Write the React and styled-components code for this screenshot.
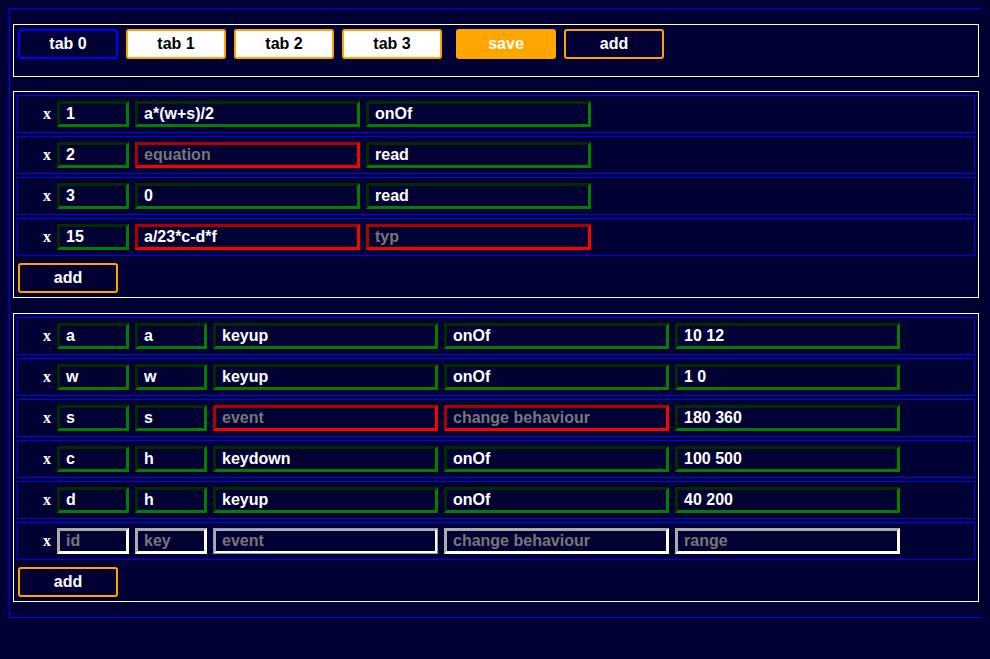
import React from "react";
import styled, { createGlobalStyle } from "styled-components";

const NAVY = "#000033";
const ORANGE = "#ffa500";

const GlobalStyle = createGlobalStyle`
  html, body {
    background: ${NAVY};
  }
  body {
    margin: 8px;
    font-family: "Liberation Sans", Arial, sans-serif;
    color: #fff;
  }
`;

const Frame = styled.div`
  box-sizing: border-box;
  width: 974px;
  margin-left: 1px;
  padding: 15px 3px;
  border: 1px solid #0000ff;
  display: flex;
  flex-direction: column;
`;

const Sheet = styled.div`
  box-sizing: border-box;
  border: 1px solid #fff;
  padding: 3px;
  margin-top: ${(props) => props.$top || 0}px;
`;

const TabBar = styled.div`
  box-sizing: border-box;
  border: 1px solid #fff;
  padding: 4px 4px 17px;
  display: flex;
  gap: 8px;
`;

const Button = styled.button`
  box-sizing: border-box;
  width: 100px;
  height: 30px;
  padding: 0;
  border-radius: 3px;
  border: 2px solid ${(props) => (props.$kind === "active" ? "#0000ff" : ORANGE)};
  background: ${(props) =>
    props.$kind === "tab" ? "#fff" : props.$kind === "save" ? ORANGE : "transparent"};
  color: ${(props) => (props.$kind === "tab" ? "#000" : "#fff")};
  font-family: "Liberation Sans", Arial, sans-serif;
  font-weight: bold;
  font-size: 16px;
  cursor: pointer;
  margin-left: ${(props) => props.$left || 0}px;
`;

const AddButton = styled(Button)`
  display: block;
  margin: 7px 0 1px 1px;
`;

const Row = styled.div`
  box-sizing: border-box;
  border: 1px solid #0000ff;
  height: 38px;
  padding: 5px 0;
  margin-bottom: 3px;
  display: flex;
  align-items: center;
  gap: 6px;
`;

const Remove = styled.span`
  width: 33px;
  text-align: right;
  font-family: "Liberation Serif", "Times New Roman", serif;
  font-weight: bold;
  font-size: 16px;
  color: #fff;
  cursor: pointer;
  line-height: 26px;
`;

const borderFor = (state) =>
  state === "ok" ? "green" : state === "bad" ? "red" : "#fff";

const Field = styled.input`
  box-sizing: border-box;
  width: ${(props) => props.$w}px;
  height: 26px;
  padding: 0 6px;
  margin: 0;
  border: 3px inset ${(props) => borderFor(props.$state)};
  background: transparent;
  color: #fff;
  font-family: "Liberation Sans", Arial, sans-serif;
  font-weight: bold;
  font-size: 16px;
  outline: ${(props) => (props.$focus ? "1px solid #7f9bd8" : "none")};
  outline-offset: -1px;

  &::placeholder {
    color: #777;
  }
`;

// DATA
const tabs = ["tab 0", "tab 1", "tab 2", "tab 3"];

const equations = [
  [["1", "ok"], ["a*(w+s)/2", "ok"], ["onOf", "ok"]],
  [["2", "ok"], ["", "bad", "equation"], ["read", "ok"]],
  [["3", "ok"], ["0", "ok"], ["read", "ok"]],
  [["15", "ok"], ["a/23*c-d*f", "bad"], ["", "bad", "typ"]],
];
const equationWidths = [72, 225, 225];

const bindings = [
  [["a", "ok"], ["a", "ok"], ["keyup", "ok"], ["onOf", "ok"], ["10 12", "ok"]],
  [["w", "ok"], ["w", "ok"], ["keyup", "ok"], ["onOf", "ok"], ["1 0", "ok"]],
  [["s", "ok"], ["s", "ok"], ["", "bad", "event"], ["", "bad", "change behaviour"], ["180 360", "ok"]],
  [["c", "ok"], ["h", "ok"], ["keydown", "ok"], ["onOf", "ok"], ["100 500", "ok"]],
  [["d", "ok"], ["h", "ok"], ["keyup", "ok"], ["onOf", "ok"], ["40 200", "ok"]],
  [["", "new", "id"], ["", "new", "key"], ["", "new", "event", true], ["", "new", "change behaviour"], ["", "new", "range"]],
];
const bindingWidths = [72, 72, 225, 225, 225];

const Table = ({ rows, widths, top }) => (
  <Sheet $top={top}>
    {rows.map((row, index) => (
      <Row key={index}>
        <Remove>x</Remove>
        {row.map(([value, state, placeholder, focus], i) => (
          <Field
            key={i}
            $w={widths[i]}
            $state={state}
            $focus={focus}
            defaultValue={value}
            placeholder={placeholder}
          />
        ))}
      </Row>
    ))}
    <AddButton $kind="add">add</AddButton>
  </Sheet>
);

const App = () => (
  <>
    <GlobalStyle />
    <Frame>
      <TabBar>
        {tabs.map((tab, index) => (
          <Button key={tab} $kind={index === 0 ? "active" : "tab"}>
            {tab}
          </Button>
        ))}
        <Button $kind="save" $left={6}>save</Button>
        <Button $kind="add">add</Button>
      </TabBar>
      <Table rows={equations} widths={equationWidths} top={14} />
      <Table rows={bindings} widths={bindingWidths} top={15} />
    </Frame>
  </>
);

export default App;
